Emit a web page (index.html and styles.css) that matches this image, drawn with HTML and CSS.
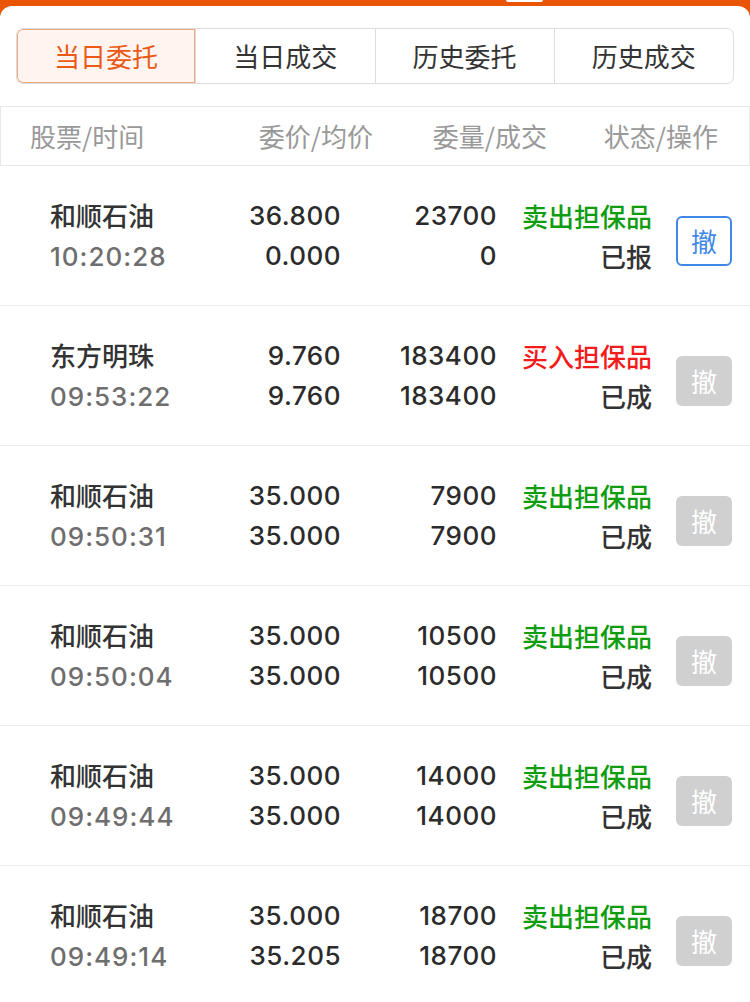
FILE: index.html
```html
<!DOCTYPE html>
<html lang="zh-CN">
<head>
  <meta charset="UTF-8">
  <meta name="viewport" content="width=device-width, initial-scale=1.0">
  <title>当日委托</title>
  <link rel="stylesheet" href="styles.css">
</head>
<body>
  <div class="topbar"><span class="notch"></span></div>

  <div class="page">
    <div class="tabs">
      <div class="tab active">当日委托</div>
      <div class="tab">当日成交</div>
      <div class="tab">历史委托</div>
      <div class="tab">历史成交</div>
    </div>

    <div class="list-head">
      <span class="col-name">股票/时间</span>
      <span>委价/均价</span>
      <span>委量/成交</span>
      <span>状态/操作</span>
    </div>

    <!-- orders -->
    <div class="order">
      <div class="cell name">和顺石油<br><span class="time">10:20:28</span></div>
      <div class="cell num">36.800<br>0.000</div>
      <div class="cell num">23700<br>0</div>
      <div class="cell status"><span class="sell">卖出担保品</span><br>已报</div>
      <div class="btn-wrap"><span class="cancel">撤</span></div>
    </div>

    <div class="order">
      <div class="cell name">东方明珠<br><span class="time">09:53:22</span></div>
      <div class="cell num">9.760<br>9.760</div>
      <div class="cell num">183400<br>183400</div>
      <div class="cell status"><span class="buy">买入担保品</span><br>已成</div>
      <div class="btn-wrap"><span class="cancel disabled">撤</span></div>
    </div>

    <div class="order">
      <div class="cell name">和顺石油<br><span class="time">09:50:31</span></div>
      <div class="cell num">35.000<br>35.000</div>
      <div class="cell num">7900<br>7900</div>
      <div class="cell status"><span class="sell">卖出担保品</span><br>已成</div>
      <div class="btn-wrap"><span class="cancel disabled">撤</span></div>
    </div>

    <div class="order">
      <div class="cell name">和顺石油<br><span class="time">09:50:04</span></div>
      <div class="cell num">35.000<br>35.000</div>
      <div class="cell num">10500<br>10500</div>
      <div class="cell status"><span class="sell">卖出担保品</span><br>已成</div>
      <div class="btn-wrap"><span class="cancel disabled">撤</span></div>
    </div>

    <div class="order">
      <div class="cell name">和顺石油<br><span class="time">09:49:44</span></div>
      <div class="cell num">35.000<br>35.000</div>
      <div class="cell num">14000<br>14000</div>
      <div class="cell status"><span class="sell">卖出担保品</span><br>已成</div>
      <div class="btn-wrap"><span class="cancel disabled">撤</span></div>
    </div>

    <div class="order">
      <div class="cell name">和顺石油<br><span class="time">09:49:14</span></div>
      <div class="cell num">35.000<br>35.205</div>
      <div class="cell num">18700<br>18700</div>
      <div class="cell status"><span class="sell">卖出担保品</span><br>已成</div>
      <div class="btn-wrap"><span class="cancel disabled">撤</span></div>
    </div>
  </div>
</body>
</html>
```

FILE: styles.css
```css
body {
  margin: 0;
  background: #e95504;
  font-family: Inter, "Noto Sans CJK SC", sans-serif;
  font-size: 26px;
  color: #333;
}

.topbar {
  height: 6px;
  padding-left: 506px;
}

.notch {
  display: block;
  width: 37px;
  height: 2px;
  background: #fff;
  border-radius: 0 0 3px 3px;
}

.page {
  background: #fff;
  border-radius: 12px 12px 0 0;
  padding-top: 22px;
}

/* Tabs */
.tabs {
  display: flex;
  margin: 0 16px 22px;
  border: 1px solid #dcdcdc;
  border-radius: 7px;
  overflow: hidden;
}

.tab {
  flex: 1;
  height: 54px;
  line-height: 54px;
  text-align: center;
  font-family: "Noto Sans CJK SC", sans-serif;
  color: #333;
  border-left: 1px solid #dcdcdc;
}

.tab:first-child {
  border-left: none;
}

.tab.active {
  background: #fff4ef;
  color: #ea5a16;
  box-shadow: inset 0 0 0 1px #f6a67f;
  border-radius: 6px 0 0 6px;
}

/* Column header */
.list-head {
  display: grid;
  grid-template-columns: 170px 173px 174px 171px;
  padding: 0 31px 0 29px;
  height: 58px;
  line-height: 58px;
  border: 1px solid #e8e8e8;
  color: #999;
  font-family: "Noto Sans CJK SC", sans-serif;
  text-align: right;
}

.list-head .col-name {
  text-align: left;
}

/* Order rows */
.order {
  display: grid;
  grid-template-columns: 150px 141px 156px 155px 80px;
  align-items: center;
  height: 139px;
  padding: 0 18px 0 50px;
  border-bottom: 1px solid #ececec;
  line-height: 40px;
}

.cell {
  font-weight: 500;
  white-space: nowrap;
}

.name {
  font-family: "Noto Sans CJK SC", sans-serif;
}

.time {
  font-family: Inter, sans-serif;
  letter-spacing: 1px;
  color: #6e6e6e;
}

.num {
  text-align: right;
  letter-spacing: 0.5px;
  color: #2b2b2b;
}

.status {
  text-align: right;
  font-family: "Noto Sans CJK SC", sans-serif;
}

.sell {
  color: #0f9d0f;
}

.buy {
  color: #f21c1c;
}

.btn-wrap {
  display: flex;
  justify-content: flex-end;
}

.cancel {
  width: 52px;
  height: 46px;
  margin-top: 10px;
  line-height: 46px;
  text-align: center;
  border: 2px solid #3f88e6;
  border-radius: 6px;
  color: #3f88e6;
  font-family: "Noto Sans CJK SC", sans-serif;
  font-weight: 400;
}

.cancel.disabled {
  border-color: #d0d0d0;
  background: #d0d0d0;
  color: #fff;
}
```
